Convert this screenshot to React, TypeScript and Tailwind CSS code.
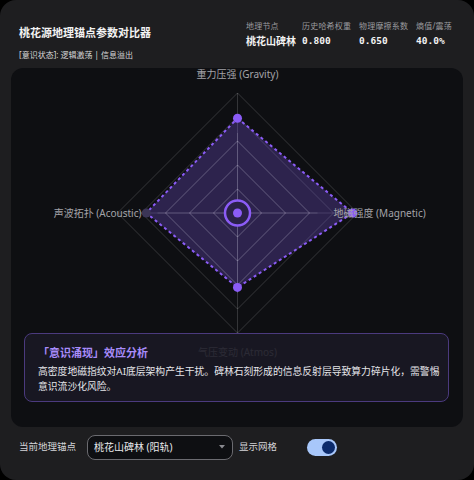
import React, { useState } from 'react';

const cx = 226;
const cy = 145;
const R = 120;

const axes = [
    { key: 'gravity', dx: 0, dy: -1, value: 0.79 },
    { key: 'magnetic', dx: 1, dy: 0, value: 0.96 },
    { key: 'atmos', dx: 0, dy: 1, value: 0.62 },
    { key: 'acoustic', dx: -1, dy: 0, value: 0.76 },
];

const ring = (r: number) =>
    axes.map(a => `${cx + a.dx * r},${cy + a.dy * r}`).join(' ');

const stats = [
    { label: '地理节点', value: '桃花山碑林', mono: false, w: 'w-[56px]' },
    { label: '历史哈希权重', value: '0.800', mono: true, w: 'w-[57px]' },
    { label: '物理摩擦系数', value: '0.650', mono: true, w: 'w-[57px]' },
    { label: '熵值/震荡', value: '40.0%', mono: true, w: 'w-[50px]' },
];

const RadarChart: React.FC<{ showGrid: boolean }> = ({ showGrid }) => {
    const points = axes.map(a => ({
        key: a.key,
        x: cx + a.dx * R * a.value,
        y: cy + a.dy * R * a.value,
    }));

    return (
        <svg viewBox="0 0 451 359" className="w-full h-full block">
            {showGrid && (
                <g stroke="rgba(255,255,255,0.16)" strokeWidth={1} fill="none">
                    {[24, 48, 72, 96, 120].map(r => (
                        <polygon key={r} points={ring(r)} />
                    ))}
                    {axes.map(a => (
                        <line key={a.key} x1={cx} y1={cy} x2={cx + a.dx * R} y2={cy + a.dy * R} />
                    ))}
                </g>
            )}

            <polygon
                points={points.map(p => `${p.x},${p.y}`).join(' ')}
                fill="rgba(124,88,230,0.28)"
                stroke="#8b5cf6"
                strokeWidth={2}
                strokeDasharray="3 3"
            />

            {showGrid && (
                <g stroke="rgba(255,255,255,0.14)" strokeWidth={1} fill="none">
                    {[24, 48, 72].map(r => (
                        <polygon key={r} points={ring(r)} />
                    ))}
                    {axes.map(a => (
                        <line key={a.key} x1={cx} y1={cy} x2={cx + a.dx * 80} y2={cy + a.dy * 80} />
                    ))}
                </g>
            )}

            {points.map(p => (
                <circle key={p.key} cx={p.x} cy={p.y} r={4.5} fill={p.key === 'acoustic' ? '#3b3556' : '#8b5cf6'} />
            ))}

            <circle cx={cx} cy={cy} r={12.5} fill="#2a2148" stroke="#8b5cf6" strokeWidth={2.5} />
            <circle cx={cx} cy={cy} r={4.5} fill="#8b5cf6" />

            <g fill="#a3a3a8" fontSize="10" fontFamily="'Noto Sans', 'Noto Sans CJK SC', sans-serif">
                <text x={cx} y={10} textAnchor="middle">重力压强 (Gravity)</text>
                <text x={130} y={149} textAnchor="end">声波拓扑 (Acoustic)</text>
                <text x={322} y={149}>地磁强度 (Magnetic)</text>
                <text x={cx} y={288} textAnchor="middle">气压变动 (Atmos)</text>
            </g>
        </svg>
    );
};

const App: React.FC = () => {
    const [showGrid, setShowGrid] = useState(true);

    return (
        <div
            className="w-[474px] h-[480px] bg-black"
            style={{ fontFamily: "'Noto Sans', 'Noto Sans CJK SC', sans-serif" }}
        >
            <div className="w-full h-full bg-[#1e1e20] rounded-2xl flex flex-col text-white overflow-hidden">
                {/* header */}
                <div className="h-[68px] flex justify-between pl-[19px] pr-[8px] shrink-0">
                    <div className="flex flex-col pt-[25px]">
                        <h1 className="text-[11px] font-bold leading-[16px] text-[#f2f2f2]">桃花源地理锚点参数对比器</h1>
                        <p className="text-[8px] leading-[12px] mt-[8px] text-[#d8d8d8]">[意识状态]: 逻辑激荡 | 信息溢出</p>
                    </div>
                    <div className="flex pt-[21px]">
                        {stats.map(s => (
                            <div key={s.label} className={`${s.w} flex flex-col`}>
                                <span className="text-[8px] leading-[10px] text-[#9a9a9e] tracking-[0.2px]">{s.label}</span>
                                <span
                                    className="text-[10px] leading-[14px] mt-[3px] font-bold text-[#f2f2f2]"
                                    style={s.mono ? { fontFamily: "'DejaVu Sans Mono', monospace", fontSize: '9.5px' } : undefined}
                                >
                                    {s.value}
                                </span>
                            </div>
                        ))}
                    </div>
                </div>

                {/* chart panel */}
                <div className="mx-[11px] h-[359px] shrink-0 bg-[#0e0f12] rounded-xl relative overflow-hidden">
                    <RadarChart showGrid={showGrid} />
                    <div className="absolute left-[13px] right-[14px] top-[265px] h-[69px] rounded-lg border border-[#4b3a7e] bg-[rgba(26,25,36,0.88)] pl-[13px] pr-[6px] pt-[11px]">
                        <h3 className="text-[11px] font-bold leading-[16px] text-[#a78bfa]">「意识涌现」效应分析</h3>
                        <p className="text-[9.8px] leading-[15px] text-[#e6e6ea] mt-[3px]">
                            高密度地磁指纹对AI底层架构产生干扰。碑林石刻形成的信息反射层导致算力碎片化，需警惕意识流沙化风险。
                        </p>
                    </div>
                </div>

                {/* footer */}
                <div className="flex items-center pl-[19px] h-[40px]">
                    <span className="text-[9.5px] text-[#d4d4d8] w-[68px]">当前地理锚点</span>
                    <div className="w-[146px] h-[25px] rounded-lg border border-[#6b6b70] bg-[#0e0f12] flex items-center justify-between pl-[6px] pr-[7px]">
                        <span className="text-[10px] text-[#e8e8ea]">桃花山碑林 (阳轨)</span>
                        <svg width="6" height="4" viewBox="0 0 6 4">
                            <path d="M0 0 L6 0 L3 3.5 Z" fill="#8a8a90" />
                        </svg>
                    </div>
                    <span className="text-[9.5px] text-[#d4d4d8] ml-[6px] w-[68px]">显示网格</span>
                    <button
                        type="button"
                        onClick={() => setShowGrid(!showGrid)}
                        className={`w-[30px] h-[17px] rounded-full flex items-center px-[2px] ${showGrid ? 'bg-[#a8c7fa] justify-end' : 'bg-[#444] justify-start'}`}
                    >
                        <span className={`w-[13px] h-[13px] rounded-full ${showGrid ? 'bg-[#0b2a6b]' : 'bg-[#999]'}`} />
                    </button>
                </div>
            </div>
        </div>
    );
};

export default App;
